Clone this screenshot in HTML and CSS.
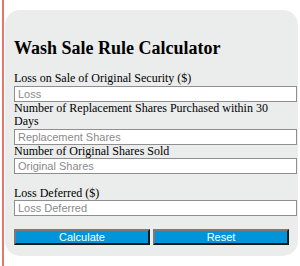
FILE: index.html
```html
<!DOCTYPE html>
<html>
<head>
<meta charset="utf-8">
<link rel="stylesheet" href="styles.css">
</head>
<body>
<div class="page">
  <div class="card">
    <h2 class="title">Wash Sale Rule Calculator</h2>
    <form class="form">
      <label class="label" for="loss">Loss on Sale of Original Security ($)</label>
      <input class="field" id="loss" type="text" placeholder="Loss">
      <label class="label" for="repl">Number of Replacement Shares Purchased within 30 Days</label>
      <input class="field" id="repl" type="text" placeholder="Replacement Shares">
      <label class="label" for="orig">Number of Original Shares Sold</label>
      <input class="field" id="orig" type="text" placeholder="Original Shares">
      <div class="spacer"></div>
      <label class="label" for="def">Loss Deferred ($)</label>
      <input class="field" id="def" type="text" placeholder="Loss Deferred">
      <div class="buttons">
        <button class="btn" type="button">Calculate</button>
        <button class="btn" type="reset">Reset</button>
      </div>
    </form>
  </div>
</div>
</body>
</html>
```
FILE: styles.css
```css
html, body {
  margin: 0;
  padding: 0;
  background: #ffffff;
}
.page {
  margin-left: 2px;
  border-left: 2px solid #e3766d;
  padding: 10px 0 10px 1px;
  min-height: 246px;
}
.card {
  width: 275px;
  background: #ebecec;
  border-radius: 15px;
  padding: 9px 9px 11px 9px;
  font-family: "Liberation Serif", "Times New Roman", serif;
  color: #000;
}
.title {
  font-size: 18px;
  font-weight: bold;
  margin: 18px 0 13px 0;
  line-height: 22px;
}
.form {
  display: flex;
  flex-direction: column;
  margin: 0;
}
.label {
  font-size: 12px;
  line-height: 13.5px;
  display: block;
}
.field {
  display: block;
  width: 275px;
  box-sizing: content-box;
  height: 14px;
  padding: 0 3px;
  margin: 0;
  border: 1px solid #8f8f8f;
  background: #fff;
  font-family: "Liberation Sans", Arial, sans-serif;
  font-size: 11px;
  color: #333;
}
.field::placeholder {
  color: #8a8a8a;
}
.spacer {
  height: 12.5px;
}
.buttons {
  display: flex;
  gap: 3px;
  margin-top: 12.5px;
}
.btn {
  width: 136px;
  height: 16px;
  padding: 0;
  background: #0095da;
  color: #fff;
  font-family: "Liberation Sans", Arial, sans-serif;
  font-size: 11px;
  border: 2px solid;
  border-color: #7a7a7a #1a1a1a #1a1a1a #7a7a7a;
}
```
